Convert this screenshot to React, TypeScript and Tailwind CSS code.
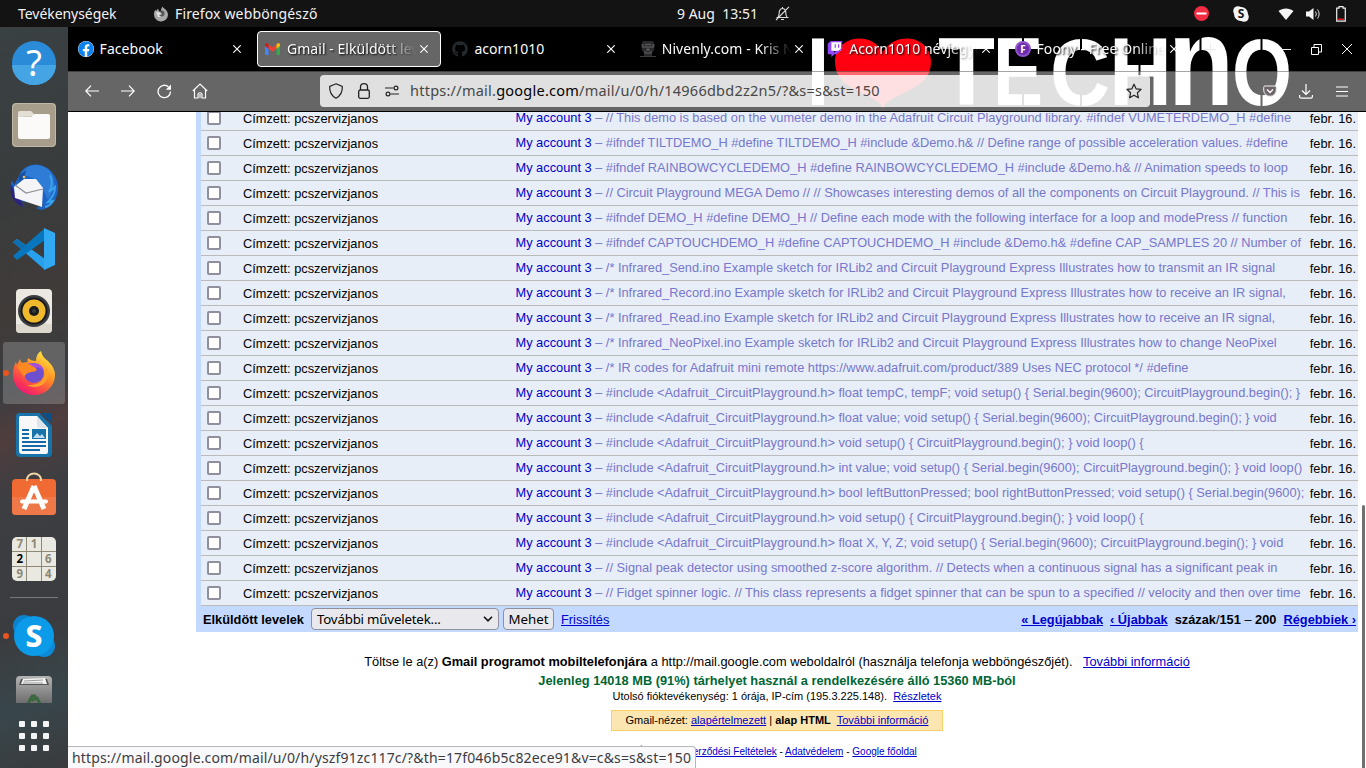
import React from "react";
import { FaFacebook, FaGithub, FaTwitch } from "react-icons/fa";

const ui = "font-['Noto_Sans',sans-serif]";

const rows: string[] = [
  "// This demo is based on the vumeter demo in the Adafruit Circuit Playground library. #ifndef VUMETERDEMO_H #define",
  "#ifndef TILTDEMO_H #define TILTDEMO_H #include &Demo.h& // Define range of possible acceleration values. #define",
  "#ifndef RAINBOWCYCLEDEMO_H #define RAINBOWCYCLEDEMO_H #include &Demo.h& // Animation speeds to loop",
  "// Circuit Playground MEGA Demo // // Showcases interesting demos of all the components on Circuit Playground. // This is",
  "#ifndef DEMO_H #define DEMO_H // Define each mode with the following interface for a loop and modePress // function",
  "#ifndef CAPTOUCHDEMO_H #define CAPTOUCHDEMO_H #include &Demo.h& #define CAP_SAMPLES 20 // Number of",
  "/* Infrared_Send.ino Example sketch for IRLib2 and Circuit Playground Express Illustrates how to transmit an IR signal",
  "/* Infrared_Record.ino Example sketch for IRLib2 and Circuit Playground Express Illustrates how to receive an IR signal,",
  "/* Infrared_Read.ino Example sketch for IRLib2 and Circuit Playground Express Illustrates how to receive an IR signal,",
  "/* Infrared_NeoPixel.ino Example sketch for IRLib2 and Circuit Playground Express Illustrates how to change NeoPixel",
  "/* IR codes for Adafruit mini remote https://www.adafruit.com/product/389 Uses NEC protocol */ #define",
  "#include <Adafruit_CircuitPlayground.h> float tempC, tempF; void setup() { Serial.begin(9600); CircuitPlayground.begin(); }",
  "#include <Adafruit_CircuitPlayground.h> float value; void setup() { Serial.begin(9600); CircuitPlayground.begin(); } void",
  "#include <Adafruit_CircuitPlayground.h> void setup() { CircuitPlayground.begin(); } void loop() {",
  "#include <Adafruit_CircuitPlayground.h> int value; void setup() { Serial.begin(9600); CircuitPlayground.begin(); } void loop()",
  "#include <Adafruit_CircuitPlayground.h> bool leftButtonPressed; bool rightButtonPressed; void setup() { Serial.begin(9600);",
  "#include <Adafruit_CircuitPlayground.h> void setup() { CircuitPlayground.begin(); } void loop() {",
  "#include <Adafruit_CircuitPlayground.h> float X, Y, Z; void setup() { Serial.begin(9600); CircuitPlayground.begin(); } void",
  "// Signal peak detector using smoothed z-score algorithm. // Detects when a continuous signal has a significant peak in",
  "// Fidget spinner logic. // This class represents a fidget spinner that can be spun to a specified // velocity and then over time",
];

function TopBar() {
  return (
    <div className={`${ui} flex h-[27px] shrink-0 items-center bg-[#131313] text-[14px] text-[#f2f2f2]`}>
      <span className="ml-[18px] w-[135px] whitespace-nowrap tracking-[-0.05px]">Tevékenységek</span>
      <svg width="16" height="16" viewBox="0 0 16 16">
        <path d="M1 8c0-2 .6-3 1.400-4.200L3 5l2-2.200L6 5c1-.2 2-.2 2.600.4L8 3.500 9.500.500C11 3 15 4 15 9a7 7 0 0 1-14-1z" fill="#a8a8a8" />
        <circle cx="8.500" cy="7.500" r="3" fill="#585858" />
        <path d="M3 6l4 .2 2 2-3 .8 2 2H5z" fill="#e2e2e2" />
      </svg>
      <span className="ml-[6px] w-[502px] whitespace-nowrap tracking-[0.14px]">Firefox webböngésző</span>
      <span className="w-[98px] whitespace-pre">9 Aug  13:51</span>
      <svg width="15" height="15" viewBox="0 0 15 15" fill="none" stroke="#dedede" strokeWidth="1.100">
        <path d="M1.500 11.500h12M3 11c1.500-1.500.8-4 1.500-6C5 3 6 2.500 7.500 2.500S10 3 10.500 5c.7 2 0 4.500 1.500 6M6 13.500h3M7.500 1v1.500M1 14 14 .8" />
      </svg>
      <div className="grow" />
      <svg width="15" height="15" viewBox="0 0 15 15" className="mr-[24px]">
        <circle cx="7.500" cy="7.500" r="7.500" fill="#f22c42" />
        <rect x="2.500" y="6.500" width="10" height="2" fill="#fff" />
      </svg>
      <svg width="16" height="16" viewBox="0 0 16 16" className="mr-[29px]">
        <circle cx="8" cy="8" r="7" fill="#f4f4f4" />
        <circle cx="5" cy="5" r="4.800" fill="#f4f4f4" />
        <circle cx="11" cy="11" r="4.800" fill="#f4f4f4" />
        <text x="8" y="12.300" textAnchor="middle" fontSize="12" fontWeight="700" fontFamily="Noto Sans" fill="#181818">S</text>
      </svg>
      <svg width="16" height="14" viewBox="0 0 16 14" className="mr-[12px]">
        <path d="M.5 4C4.500.6 11.500.6 15.500 4L8 13z" fill="#f4f4f4" />
      </svg>
      <svg width="16" height="14" viewBox="0 0 16 14" className="mr-[14px]">
        <path d="M0 4.500h3L7.500 1v12L3 9.500H0z" fill="#f4f4f4" />
        <path d="M9.500 4.500q1.800 2.500 0 5M11.500 2.500q3.300 4.500 0 9" fill="none" stroke="#e0e0e0" />
      </svg>
      <svg width="10" height="16" viewBox="0 0 10 16" className="mr-[20px]">
        <path d="M.7 2.200h2.300V.7h4v1.500h2.300v13H.7z" fill="none" stroke="#f0f0f0" strokeWidth="1.200" />
        <rect x="2" y="12.500" width="6" height="1.500" fill="#e01b24" />
      </svg>
    </div>
  );
}

function Cell({ children, active, dot }: { children: React.ReactNode; active?: boolean; dot?: boolean }) {
  return (
    <div className="relative flex h-[62px] w-[68px] shrink-0 items-center justify-center">
      {active && <div className="absolute inset-x-[3px] inset-y-0 rounded-[3px] bg-white/20" />}
      {dot && <div className="absolute left-[3px] top-[28px] h-[6px] w-[6px] rounded-full bg-[#e95420]" />}
      <div className="relative">{children}</div>
    </div>
  );
}

function Dock() {
  return (
    <aside className="flex w-[68px] shrink-0 flex-col items-center overflow-hidden bg-[linear-gradient(160deg,#3a4143_0%,#393c3d_22%,#403b39_38%,#3b3d40_48%,#503d3e_54%,#3c3e42_62%,#3b3c3f_80%,#38464b_90%,#3a3b3d_100%)] pt-[5px]">
      <Cell>
        <svg width="46" height="46" viewBox="0 0 46 46">
          <circle cx="23" cy="23" r="22" fill="#2a8bd9" />
          <path d="M1 25a22 20 0 0 0 44 0z" fill="#45a5e4" />
          <text x="23" y="36" textAnchor="middle" fontSize="36" fontFamily="Noto Sans" fill="#fff">?</text>
        </svg>
      </Cell>
      <Cell>
        <svg width="44" height="44" viewBox="0 0 44 44">
          <rect width="44" height="44" rx="4" fill="#a79d8b" />
          <rect x=".5" y=".5" width="43" height="43" rx="4" fill="none" stroke="#c0b7a6" />
          <path d="M6 14v-4q0-2 2-2h11l3 3h14q2 0 2 2z" fill="#e4e0d8" />
          <path d="M6 14h13l4-3h13q2 0 2 2v21q0 2-2 2H8q-2 0-2-2z" fill="#fbfaf8" />
        </svg>
      </Cell>
      <Cell>
        <svg width="48" height="48" viewBox="0 0 48 48">
          <path d="M9 13C12 3 24-1 33 3c9 3 15 12 15 22 0 11-6 20-17 22l-5-2 8-3L10 38l5 6C3 41-2 27 2 17l2 5z" fill="#1d63c4" />
          <path d="M11 12C14 3 24 0 32 3c9 3 13 11 12 22l-6 12-5-11-8-10-8-3-8 3z" fill="#2f7cd6" />
          <path d="M1 21c-2 12 3 20 13 23l-4-8-5-6z" fill="#2c237e" />
          <path d="M4 24l10-8 12 0 7 9-1 19-6-2-21-7z" fill="#f5f5f7" />
          <path d="M5 22l11 8 17-4" fill="none" stroke="#8f9098" strokeWidth="1.200" />
          <path d="M9 13l7-6q-1 5-2 8l-5 4z" fill="#174e9d" />
          <circle cx="14" cy="14" r="1.300" fill="#f2c15a" />
          <path d="M40 12q4 9-1 17l6-5q0 8-7 15l5-1q-3 5-8 6" fill="none" stroke="#39a2eb" strokeWidth="2" />
        </svg>
      </Cell>
      <Cell>
        <svg width="42" height="42" viewBox="0 0 42 42">
          <path d="M0 14l4-3 28 20v11z" fill="#29a0ec" />
          <path d="M0 28l4 4L32 12V0z" fill="#0876bd" />
          <path d="M0 14l4-3 10 8-5 3z" fill="#0d6fb2" />
          <path d="M31 0l11 5v32l-11 5z" fill="#31a9f3" />
        </svg>
      </Cell>
      <Cell>
        <svg width="38" height="46" viewBox="0 0 38 46">
          <rect x="1" y="1" width="36" height="44" rx="4" fill="#ebe9e2" />
          <path d="M1 36h36v5q0 4-4 4H5q-4 0-4-4z" fill="#dcd8cd" />
          <circle cx="19" cy="23" r="16" fill="#3b3d40" />
          <circle cx="19" cy="23" r="13.500" fill="#17191c" />
          <circle cx="19" cy="23" r="11.500" fill="#f0b82c" />
          <circle cx="19" cy="23" r="5" fill="#191b1d" />
          <circle cx="19" cy="23" r="2" fill="#3a3d40" />
        </svg>
      </Cell>
      <Cell active dot>
        <svg width="42" height="44" viewBox="0 0 42 44">
          <defs>
            <linearGradient id="fox" x1=".8" y1="0" x2=".2" y2="1">
              <stop offset="0" stopColor="#fff044" />
              <stop offset=".45" stopColor="#ff8b22" />
              <stop offset=".8" stopColor="#fb3455" />
              <stop offset="1" stopColor="#e31587" />
            </linearGradient>
          </defs>
          <path d="M7 8q1 4 3 4l5-1q-1-1 0-4 3 3 8 3 0-7 5-10 1 6 7 10 7 7 7 14a21 20 0 0 1-42 0Q0 16 3 11l1 3z" fill="url(#fox)" />
          <circle cx="21" cy="22" r="10" fill="#6d4fd0" />
          <path d="M14 12l10 1q6 1 7 7-5-6-11-2z" fill="#a84fe0" />
          <path d="M4 16q6-7 12-3l5 3q2 1 3 3-2 2-6 2-5 1-7 5-3-5-7-10z" fill="#ff8a24" />
          <path d="M34 17q4 11-5 17-8 4-15 0 13 1 17-8z" fill="#ffa02a" />
        </svg>
      </Cell>
      <Cell>
        <svg width="38" height="46" viewBox="0 0 38 46">
          <path d="M4 1h20l13 13v27q0 4-4 4H5q-4 0-4-4V5q0-4 3-4z" fill="#1873aa" />
          <path d="M26 1h8q3 0 3 3v8z" fill="#0c4f86" />
          <path d="M5 4h17l11 12v24q0 2-2 2H7q-3 0-3-3V5z" fill="#f8f8f8" />
          <path d="M22 4v9q0 3 3 3h8z" fill="#dce4ea" />
          <path d="M7 18h7M7 22h7M7 26h7M7 30h24M7 34h24M7 38h18" stroke="#126ba8" strokeWidth="2" />
          <rect x="17" y="17" width="14" height="10" fill="#1873aa" />
          <path d="M18 26l4-5 3 3 2-2 3 4z" fill="#bddcf0" />
        </svg>
      </Cell>
      <Cell>
        <svg className="mb-[6px]" width="44" height="44" viewBox="0 0 44 44">
          <rect y="7" width="44" height="36" rx="4" fill="#f06a34" />
          <path d="M0 25h44v14q0 4-4 4H4q-4 0-4-4z" fill="#ef7849" />
          <path d="M15 9C14-1 30-1 29 9" fill="none" stroke="#f0d5a5" strokeWidth="2" />
          <path d="M22 14L12 37M22 14l10 23" stroke="#fff" strokeWidth="5" />
          <path d="M10 29.500h24" stroke="#fff" strokeWidth="4" strokeLinecap="round" />
        </svg>
      </Cell>
      <Cell>
        <div className={`${ui} grid h-[44px] w-[44px] grid-cols-3 grid-rows-3 place-items-center gap-px rounded-[5px] bg-[#e9e8e1] bg-[linear-gradient(90deg,transparent_14px,#8e8876_14px,#8e8876_15px,transparent_15px,transparent_29px,#8e8876_29px,#8e8876_30px,transparent_30px),linear-gradient(transparent_14px,#8e8876_14px,#8e8876_15px,transparent_15px,transparent_29px,#8e8876_29px,#8e8876_30px,transparent_30px)] px-[1px] text-[11.500px] font-bold leading-[14px] text-[#8e8876]`}>
          <span>7</span><span>1</span><span />
          <span className="text-black">2</span><span /><span>6</span>
          <span>9</span><span /><span>4</span>
        </div>
      </Cell>
      <div className="mt-[7px] h-px w-[48px] shrink-0 bg-[#75797b]" />
      <div className="mt-[7px]">
        <Cell dot>
          <svg width="44" height="44" viewBox="0 0 44 44">
            <circle cx="12" cy="12" r="11" fill="#0b83cf" />
            <circle cx="32" cy="32" r="11" fill="#0c8ad5" />
            <circle cx="22" cy="22" r="20" fill="#0c9be8" />
            <text x="22" y="33" textAnchor="middle" fontSize="30" fontWeight="800" fontFamily="Noto Sans" fill="#fff">S</text>
          </svg>
        </Cell>
      </div>
      <svg className="mt-[9px] shrink-0" width="36" height="27" viewBox="0 0 36 27">
        <defs>
          <linearGradient id="bin" x1="0" y1="0" x2="0" y2="1">
            <stop offset="0" stopColor="#b4b4b4" />
            <stop offset="1" stopColor="#6b6b6b" />
          </linearGradient>
        </defs>
        <path d="M0 28V4q0-4 4-4h28q4 0 4 4v24z" fill="url(#bin)" />
        <path d="M3 9l2-6h26l2 6z" fill="#555" />
        <path d="M5 8l2-5 22-1 2 6z" fill="#f2f2f2" />
        <path d="M8 5l19-1M7 7h20" stroke="#999" />
        <path d="M12 28l3-6 3 3M24 28l-3-6-3 1M15 20h5" stroke="#3b6840" strokeWidth="3" fill="none" />
      </svg>
      <div className="mt-[18px] grid shrink-0 grid-cols-3 gap-[6px]">
        {Array.from({ length: 9 }, (_, i) => (
          <span key={i} className="h-[6px] w-[6px] rounded-[1px] bg-[#f4f4f4]" />
        ))}
      </div>
    </aside>
  );
}

/* Wallpaper banner showing through the translucent window chrome. */
function Banner() {
  const letter = {
    fill: "#fff",
    fontFamily: "Liberation Sans",
    fontWeight: 700,
    fontSize: 97,
    lengthAdjust: "spacingAndGlyphs" as const,
  };
  return (
    <svg className="absolute left-0 top-0" width="1298" height="84" viewBox="68 27 1298 84">
      <text {...letter} x="806.500" y="105" textLength="23">I</text>
      <path d="M883 108C876 92 835 92 835 62C835 36 870 30 883 52C896 30 931 36 931 62C931 92 890 92 883 108z" fill="#ff0010" />
      <text {...letter} x="938" y="105" textLength="57">T</text>
      <text {...letter} x="993" y="105" textLength="50">E</text>
      <text {...letter} fontSize="94" x="1050" y="105" textLength="60">C</text>
      <text {...letter} x="1109" y="105" textLength="63">H</text>
      <text {...letter} fontSize="126" x="1168" y="105" textLength="66">n</text>
      <text {...letter} fontSize="94" x="1232" y="105" textLength="60">O</text>
      <path d="M1200.500 36v16M1261.500 36v16M1261.500 91v16M1081 36v16M1081 91v16M1139.500 60v20M1023 36v16M1023 91v16" stroke="#000" strokeWidth="2" />
    </svg>
  );
}

function X({ className = "" }: { className?: string }) {
  return (
    <svg className={`shrink-0 ${className}`} width="8" height="8" viewBox="0 0 8 8">
      <path d="M.3.3l7.400 7.400M7.700.3L.3 7.700" stroke="#fff" strokeWidth="1.100" />
    </svg>
  );
}

function Tab({ icon, label, fade, active }: { icon: React.ReactNode; label: string; fade?: boolean; active?: boolean }) {
  return (
    <div className={`flex h-[36px] w-[184px] shrink-0 items-center rounded-[4px] pl-[7px] pr-[11px] ${active ? "border border-white bg-white/40" : "border border-transparent"}`}>
      <span className="flex w-[16px] shrink-0 justify-center">{icon}</span>
      <span className={`ml-[6px] w-[132px] shrink-0 overflow-hidden whitespace-nowrap pb-px text-[14px] leading-[24px] tracking-[0.05px] text-[#fbfbfb] [text-shadow:1px_1px_2px_#000] ${fade ? "[mask-image:linear-gradient(90deg,#000_74%,transparent_98%)]" : ""}`}>{label}</span>
      <X className="ml-[1px]" />
    </div>
  );
}

const Gmail = () => (
  <svg width="15" height="12" viewBox="0 0 15 12">
    <path d="M0 2l3.500 2.700V12H1q-1 0-1-1z" fill="#4285f4" />
    <path d="M15 2l-3.500 2.700V12H14q1 0 1-1z" fill="#34a853" />
    <path d="M3.500 1.200l4 3 4-3v4.500l-4 3-4-3z" fill="#ea4335" />
    <path d="M0 3V1.600Q.3-.5 2.300.3l1.200.9v4.500z" fill="#c5221f" />
    <path d="M15 3V1.600Q14.700-.5 12.700.3l-1.200.9v4.500z" fill="#fbbc04" />
  </svg>
);

const Lion = () => (
  <svg width="16" height="16" viewBox="0 0 16 16">
    <path d="M3 0h10l2 4-1 5-2 3v3H4v-3L2 9 1 4z" fill="#2a2a2c" />
    <path d="M0 15.500h16" stroke="#3c3c3e" />
    <path d="M5 3l2 1 2-1 2 1M4 6h3M9 6h3M6 9h4M8 5v4M6 12h4M3 3v4M13 3v4M5 10v3M11 10v3" stroke="#77777b" strokeWidth=".8" fill="none" />
  </svg>
);

const Foony = () => (
  <svg width="16" height="16" viewBox="0 0 16 16">
    <circle cx="8" cy="8" r="8" fill="#8e55cc" />
    <circle cx="8" cy="8" r="6" fill="#6d2bac" />
    <text x="8" y="11.700" textAnchor="middle" fontSize="10" fontWeight="700" fontFamily="Noto Sans" fill="#fff">F</text>
  </svg>
);

function Chrome() {
  return (
    <div className={`${ui} relative z-10 shrink-0 bg-black`}>
      <Banner />
      <div className="relative flex h-[44px] items-center gap-[3.400px] pl-[1.600px]">
        <Tab icon={<FaFacebook className="rounded-full bg-white" size={16} color="#0c82ee" />} label="Facebook" />
        <Tab active fade icon={<Gmail />} label="Gmail - Elküldött levelek" />
        <Tab icon={<FaGithub size={16} color="#24292e" />} label="acorn1010" />
        <Tab fade icon={<Lion />} label="Nivenly.com - Kris Nóva" />
        <Tab fade icon={<FaTwitch className="bg-[linear-gradient(#fff,#fff)] bg-[length:10px_9px] bg-[position:4px_1px] bg-no-repeat" size={16} color="#9146ff" />} label="Acorn1010 névjegye" />
        <Tab fade icon={<Foony />} label="Foony - Free Online Games" />
        <div className="flex grow items-center justify-end pr-[14px]">
          <svg width="12" height="12" viewBox="0 0 12 12"><path d="M0 6.500h12M6.500 0v12" stroke="#eee" /></svg>
          <div className="ml-[65px] h-px w-[10px] bg-[#eee]" />
          <svg className="ml-[20px]" width="11" height="11" viewBox="0 0 11 11" fill="none" stroke="#fff"><path d="M.5 3.500h7v7h-7zM3 3V.5h7.500V8H8" /></svg>
          <svg className="ml-[20px]" width="10" height="10" viewBox="0 0 10 10"><path d="M0 0l10 10M10 0L0 10" stroke="#fff" /></svg>
        </div>
      </div>
      <div className="relative flex h-[40px] items-center bg-white/40 shadow-[inset_0_1px_0_rgba(0,0,0,0.35)]">
        <svg className="ml-[17px]" width="14" height="12" viewBox="0 0 14 12" fill="none" stroke="#fff" strokeWidth="1.200"><path d="M14 6H1M6 .7L.8 6 6 11.300" /></svg>
        <svg className="ml-[22px]" width="14" height="12" viewBox="0 0 14 12" fill="none" stroke="#fff" strokeWidth="1.200"><path d="M0 6h13M8 .7L13.200 6 8 11.300" /></svg>
        <svg className="ml-[22px]" width="15" height="15" viewBox="0 0 15 15"><path d="M13.500 7.500a6.200 6.200 0 1 1-2-4.600" fill="none" stroke="#fff" strokeWidth="1.300" /><path d="M14 .5v5.200H8.800z" fill="#fff" /></svg>
        <svg className="ml-[20px]" width="16" height="16" viewBox="0 0 16 16" fill="none" stroke="#fff" strokeWidth="1.200"><path d="M.8 8L8 1l7.200 7M2.500 7v8H6v-4q2-2.500 4 0v4h3.500V7M8 11v4" /></svg>
        <div className="ml-[112px] flex h-[32px] w-[830px] shrink-0 items-center rounded-[4px] bg-white/80 text-[14.500px] text-[#474747]">
          <svg className="ml-[8px]" width="16" height="16" viewBox="0 0 16 16" fill="none" stroke="#222" strokeWidth="1.200"><path d="M8 .8l6.300 2.700c.3 5-1.300 9-6.300 11.700C3 12.500 1.400 8.500 1.700 3.500z" /></svg>
          <svg className="ml-[14px]" width="12" height="16" viewBox="0 0 12 16" fill="none" stroke="#222" strokeWidth="1.300"><path d="M2.500 7V4q0-3.300 3.500-3.300T9.500 4v3" /><rect x=".7" y="7" width="10.600" height="8.300" rx="1.500" /></svg>
          <svg className="ml-[15px]" width="14" height="12" viewBox="0 0 14 12" fill="none" stroke="#222" strokeWidth="1.200"><path d="M0 3h8.500M5.500 9H14" /><circle cx="11" cy="3" r="1.900" /><circle cx="3" cy="9" r="1.900" /></svg>
          <span className="ml-[11px] whitespace-nowrap tracking-[0.240px]">https://mail.<span className="text-black">google.com</span>/mail/u/0/h/14966dbd2z2n5/?&amp;s=s&amp;st=150</span>
          <svg className="ml-auto mr-[8px]" width="16" height="16" viewBox="0 0 16 16" fill="none" stroke="#222" strokeWidth="1.200"><path d="M8 1.200l2.100 4.600 5 .6-3.700 3.400 1 5L8 12.300l-4.400 2.500 1-5L.9 6.400l5-.6z" strokeLinejoin="round" /></svg>
        </div>
        <svg className="ml-[113px]" width="14" height="13" viewBox="0 0 14 13"><path d="M2 1h10q1.300 0 1.300 1.300V5a6 6 0 0 1-12.600 0V2.300Q.7 1 2 1z" fill="#6e656a" stroke="#eee" /><path d="M4 4.500l3 3 3-3" fill="none" stroke="#fff" strokeWidth="1.300" /></svg>
        <svg className="ml-[22px]" width="14" height="15" viewBox="0 0 14 15" fill="none" stroke="#fff" strokeWidth="1.200"><path d="M7 0v10M3 6.500l4 4 4-4M.6 11v1.500q0 1.700 1.700 1.700h9.400q1.700 0 1.700-1.700V11" /></svg>
        <svg className="ml-[23px]" width="12" height="11" viewBox="0 0 12 11" stroke="#fff" strokeWidth="1.200"><path d="M0 1h12M0 5.500h12M0 10h12" /></svg>
      </div>
      <div className="h-px bg-black" />
    </div>
  );
}

function Row({ text }: { text: string }) {
  return (
    <div className="flex h-[25px] items-center whitespace-nowrap border-b border-[#bbb] bg-[#e8eef7]">
      <div className="ml-[6px] h-[14px] w-[14px] shrink-0 rounded-[2px] border-2 border-[#8f8f9d] bg-white" />
      <div className="ml-[22px] w-[272.500px] shrink-0 pt-[1px] text-black">Címzett: pcszervizjanos</div>
      <div className="w-[794px] shrink-0 pb-px text-[#7777cc]"><span className="text-[#0000cc]">My account 3</span> – {text}</div>
      <div className="ml-auto mr-[2px] pt-px text-black">febr. 16.</div>
    </div>
  );
}

const A = ({ children, className = "" }: { children: React.ReactNode; className?: string }) => (
  <a className={`text-[#0000cc] underline ${className}`}>{children}</a>
);

function Mail() {
  return (
    <main className="relative min-h-0 grow overflow-hidden bg-white font-['Liberation_Sans',Arial,sans-serif] text-[12.800px] leading-[15px]">
      <div className="ml-[128px] mt-[-6px] w-[1162px] bg-[#c3d9ff] pl-[5px]">
        {rows.map((r, i) => <Row key={i} text={r} />)}
        <div className="flex h-[26px] items-center pl-[2px] pr-[2px]">
          <b className="w-[108px]">Elküldött levelek</b>
          <div className={`${ui} flex h-[22px] w-[188px] items-center justify-between rounded-[4px] border border-[#8f8f9d] bg-[#e9e9ed] pl-[5px] pr-[5px] text-[13.300px] tracking-[-0.200px]`}>
            További műveletek...
            <svg width="10" height="6" viewBox="0 0 10 6"><path d="M1 .8l4 4 4-4" fill="none" stroke="#111" strokeWidth="1.600" /></svg>
          </div>
          <button className={`${ui} ml-[4px] mr-[7px] h-[22px] w-[51px] rounded-[4px] border border-[#8f8f9d] bg-[#e9e9ed] text-[13.300px] leading-[18px]`}>Mehet</button>
          <A>Frissítés</A>
          <div className="ml-auto flex gap-[7px] font-bold">
            <A>« Legújabbak</A><A>‹ Újabbak</A><span>százak<span className="font-normal">/</span>151 <span className="font-normal">–</span> 200</span><A>Régebbiek ›</A>
          </div>
        </div>
      </div>
      <div className="ml-[128px] flex w-[1162px] flex-col items-center whitespace-nowrap text-black">
        <div className="mt-[22px] whitespace-pre">Töltse le a(z) <b>Gmail programot mobiltelefonjára</b> a http://mail.google.com weboldalról (használja telefonja webböngészőjét).   <A>További információ</A></div>
        <div className="mt-[4px] font-bold text-[#006633]">Jelenleg 14018 MB (91%) tárhelyet használ a rendelkezésére álló 15360 MB-ból</div>
        <div className="mt-px whitespace-pre text-[11px] leading-[14px]">Utolsó fióktevékenység: 1 órája, IP-cím (195.3.225.148).  <A>Részletek</A></div>
        <div className="mt-[7px] h-[21px] w-[332px] whitespace-pre border border-[#fad163] bg-[#fbe5b0] text-center text-[11px] leading-[19px]">Gmail-nézet: <A>alapértelmezett</A> | <b>alap HTML</b>  <A>További információ</A></div>
        <div className="mt-[14px] text-[10px] leading-[13px]"><A>Általános Szerződési Feltételek</A> - <A>Adatvédelem</A> - <A>Google főoldal</A></div>
      </div>
      <div className="absolute bottom-0 right-[1px] top-[393px] w-[3px] rounded-t-[2px] bg-[#707070]" />
      <div className={`${ui} absolute bottom-0 left-0 h-[22px] w-[628px] whitespace-nowrap rounded-tr-[4px] border-r border-t border-[#b8b8ba] bg-[#f9f9fb] pl-[4px] text-[14px] leading-[21px] tracking-[0.150px] text-[#3c3c40]`}>https://mail.google.com/mail/u/0/h/yszf91zc117c/?&amp;th=17f046b5c82ece91&amp;v=c&amp;s=s&amp;st=150</div>
    </main>
  );
}

export default function App() {
  return (
    <div className="flex h-[768px] w-[1366px] flex-col overflow-hidden bg-white">
      <TopBar />
      <div className="flex min-h-0 grow">
        <Dock />
        <div className="flex w-[1298px] flex-col">
          <Chrome />
          <Mail />
        </div>
      </div>
    </div>
  );
}
